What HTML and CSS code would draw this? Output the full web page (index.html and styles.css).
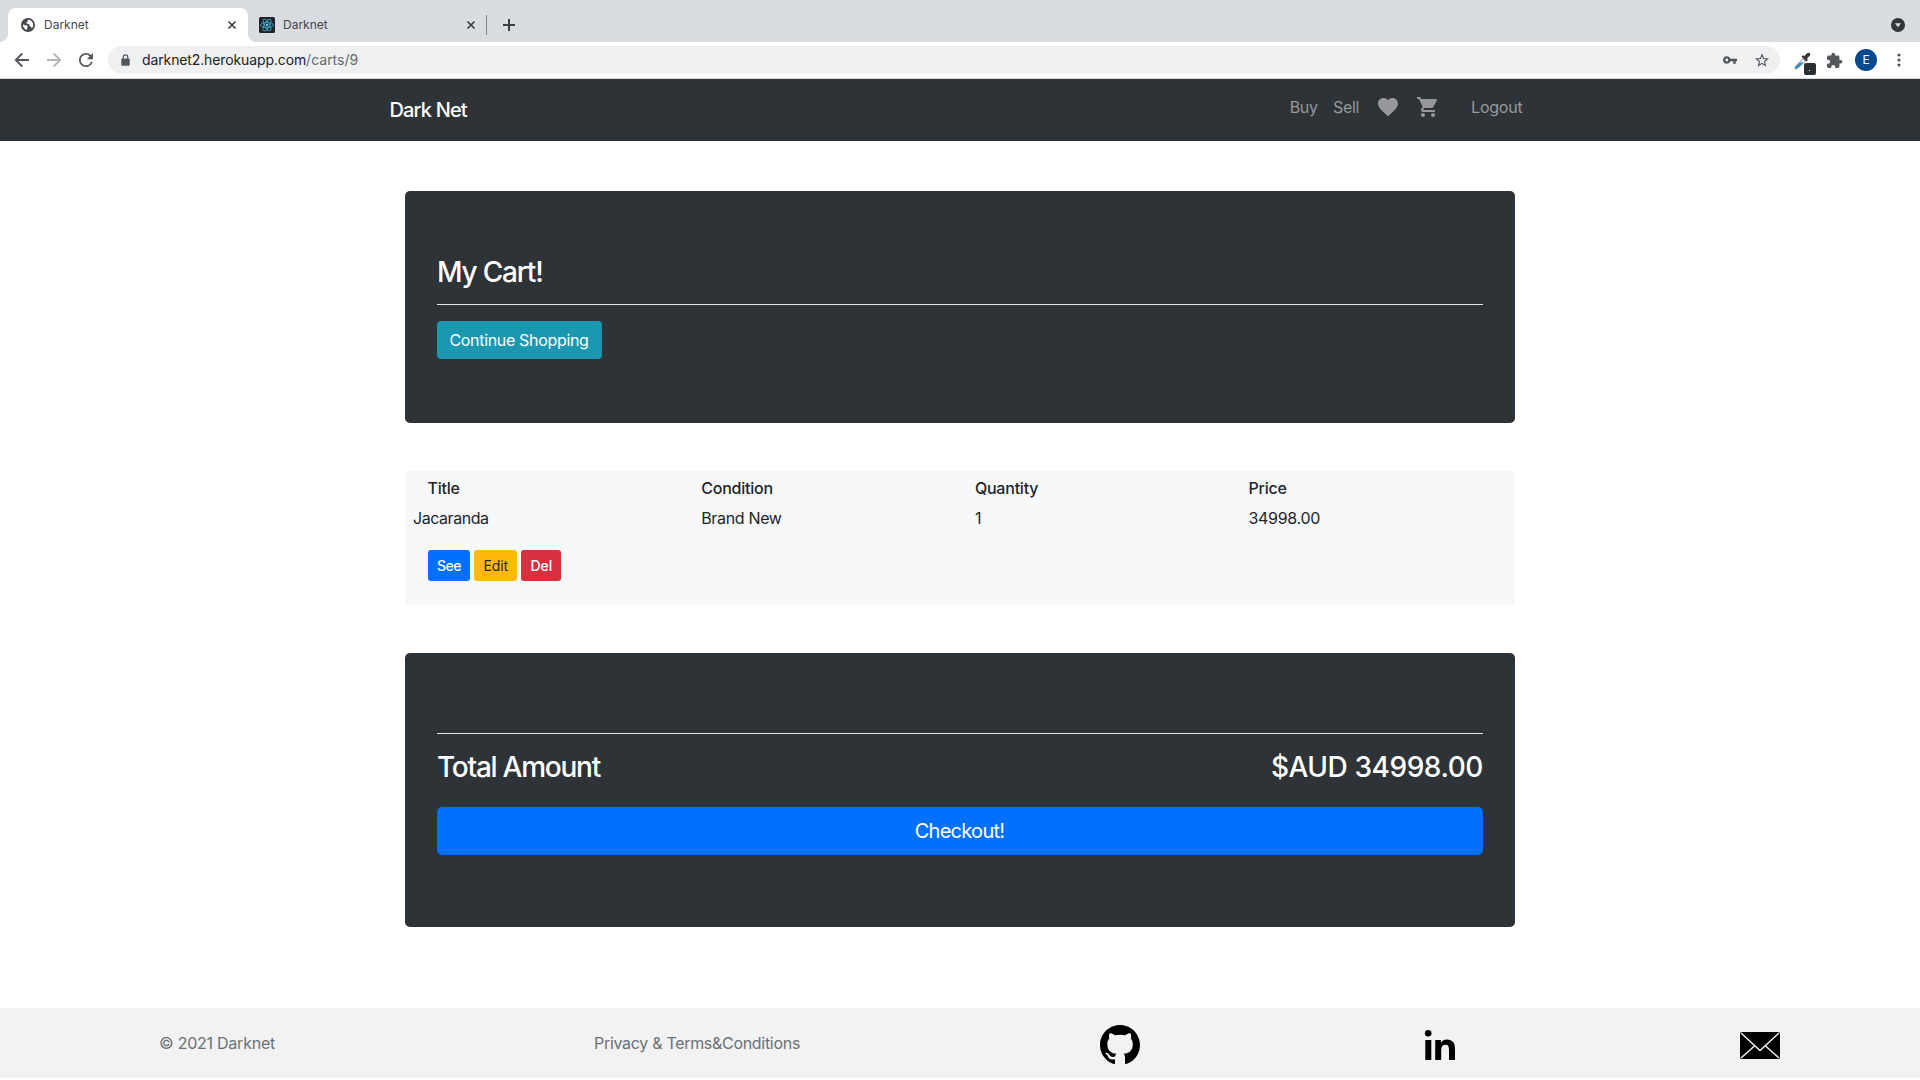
FILE: index.html
```html
<!DOCTYPE html>
<html lang="en">
<head>
<meta charset="utf-8">
<title>Darknet</title>
<link rel="stylesheet" href="styles.css">
</head>
<body>
<header class="browser">
  <div class="tabstrip">
    <div class="tab tab-active">
      <svg class="favicon" viewBox="0 0 14 14"><circle cx="7" cy="7" r="7" fill="#45484d"/><path d="M1.800 6.500c1.400.2 2.800.7 4 .9 1.300.2.9 1.300.5 2.100-.3.8.1 1.600-.6 2.400-2.300-.8-3.900-2.800-3.900-5.400zM7.200 1.700c2.800.1 5 2.400 5 5.200 0 1.200-.5 2.500-1.300 3.500-.5-.7-.5-1.600-1.500-1.900-.9-.2-.5-1.400-1.200-2C7.300 5.600 5.400 6 4.900 5.200c-.2-.9 1.500-.7 1.700-1.400.2-.7-.1-1.400.6-2.100z" fill="#fff"/></svg>
      <span class="tab-title">Darknet</span>
      <svg class="tab-close" viewBox="0 0 10 10"><path d="M1.500 1.500l7 7M8.500 1.500l-7 7"/></svg>
    </div>
    <div class="tab tab-second">
      <svg class="favicon-react" viewBox="0 0 16 16"><rect width="16" height="16" rx="1.500" fill="#20232a"/><g fill="none" stroke="#3fa9c6" stroke-width=".9"><ellipse cx="8" cy="8" rx="6.500" ry="2.500"/><ellipse cx="8" cy="8" rx="6.500" ry="2.500" transform="rotate(60 8 8)"/><ellipse cx="8" cy="8" rx="6.500" ry="2.500" transform="rotate(120 8 8)"/></g><circle cx="8" cy="8" r="1.200" fill="#61dafb"/></svg>
      <span class="tab-title">Darknet</span>
      <svg class="tab-close" viewBox="0 0 10 10"><path d="M1.500 1.500l7 7M8.500 1.500l-7 7"/></svg>
    </div>
    <span class="tab-divider"></span>
    <svg class="new-tab" viewBox="0 0 12 12"><path d="M6 0v12M0 6h12" stroke="#3c4043" stroke-width="2"/></svg>
    <svg class="tab-search" viewBox="0 0 14 14"><circle cx="7" cy="7" r="7" fill="#33373b"/><path d="M4 5.200h6L7 9.200z" fill="#dadce0"/></svg>
  </div>
  <div class="toolbar">
    <svg class="nav-arrow" viewBox="0 0 16 16"><path d="M15 8H2M8.300 1.500L1.800 8l6.500 6.500"/></svg>
    <svg class="nav-arrow nav-forward" viewBox="0 0 16 16"><path d="M1 8h13M7.700 1.500L14.200 8l-6.500 6.500"/></svg>
    <svg class="reload" viewBox="4 4 16 16"><path d="M17.650 6.350A7.958 7.958 0 0 0 12 4c-4.420 0-7.990 3.580-7.990 8s3.570 8 7.990 8c3.730 0 6.840-2.550 7.730-6h-2.080A5.990 5.990 0 0 1 12 18c-3.310 0-6-2.690-6-6s2.690-6 6-6c1.660 0 3.140.69 4.220 1.780L13 11h7V4l-2.350 2.350z" fill="#54575c"/></svg>
    <div class="omnibox">
      <svg class="lock" viewBox="0 0 9 12"><path d="M2.200 5V3.200a2.300 2.300 0 0 1 4.600 0V5" fill="none" stroke="#54575c" stroke-width="1.200"/><rect x=".3" y="4.500" width="8.400" height="7.200" rx="1" fill="#54575c"/></svg>
      <span class="url-host">darknet2.herokuapp.com</span><span class="url-path">/carts/9</span>
      <svg class="key" viewBox="1 6 22 12"><path d="M12.650 10C11.830 7.670 9.610 6 7 6c-3.310 0-6 2.690-6 6s2.690 6 6 6c2.610 0 4.830-1.670 5.650-4H17v4h4v-4h2v-4H12.650zM7 14.200A2.200 2.200 0 1 1 7 9.800a2.200 2.200 0 0 1 0 4.400z" fill="#54575c"/></svg>
      <svg class="star" viewBox="2 2 20 19"><path d="M22 9.240l-7.190-.62L12 2 9.190 8.630 2 9.240l5.460 4.730L5.820 21 12 17.270 18.180 21l-1.630-7.030L22 9.240zM12 15.400l-3.760 2.270 1-4.280-3.320-2.880 4.380-.38L12 6.100l1.710 4.040 4.380.38-3.320 2.880 1 4.280L12 15.400z" fill="#54575c"/></svg>
    </div>
    <svg class="picker" viewBox="0 0 22 23"><path d="M1.200 14.600L9 6.500l2.500 2.500-8 7.500-2.400.6z" fill="#eef1f3" stroke="#8b8f93"/><path d="M1.500 14.700l4.500-4.200h3.400l-6 5.700-2 .4z" fill="#2e8bcb"/><path d="M7.500 4.800l1.600-1.600 1.700.8c1.200-2 2.300-3.500 4.100-3.300 1.300.2 1.800 1.700 1 2.900-.8 1.200-1.900 1.900-2.700 2.700l.6 1.700-1.500 1.500z" fill="#3b3735"/><rect x="10" y="11" width="12" height="12" rx="2" fill="#2b2f33"/><rect x="15" y="18" width="1" height="1" fill="#fff"/></svg>
    <svg class="puzzle" viewBox="2 1.500 20.500 20.500"><path d="M20.500 11H19V7c0-1.100-.9-2-2-2h-4V3.500a2.500 2.500 0 0 0-5 0V5H4c-1.100 0-1.990.9-1.990 2v3.800H3.500c1.490 0 2.700 1.210 2.700 2.700s-1.210 2.700-2.700 2.700H2V20c0 1.100.9 2 2 2h3.800v-1.500c0-1.490 1.210-2.700 2.700-2.700s2.700 1.210 2.700 2.700V22H17c1.100 0 2-.9 2-2v-4h1.500a2.500 2.500 0 0 0 0-5z" fill="#54575c"/></svg>
    <span class="avatar">E</span>
    <svg class="menu" viewBox="0 0 4 14"><g fill="#54575c"><circle cx="2" cy="2" r="1.600"/><circle cx="2" cy="7" r="1.600"/><circle cx="2" cy="12" r="1.600"/></g></svg>
  </div>
</header>

<nav class="navbar">
  <a class="brand">Dark Net</a>
  <div class="links">
    <a class="link">Buy</a>
    <a class="link">Sell</a>
    <svg class="nav-icon" viewBox="0 0 24 24"><path d="M12 21.350l-1.450-1.320C5.400 15.360 2 12.280 2 8.500 2 5.420 4.420 3 7.500 3c1.740 0 3.410.81 4.500 2.090C13.090 3.810 14.760 3 16.500 3 19.580 3 22 5.420 22 8.500c0 3.780-3.400 6.860-8.550 11.540L12 21.350z"/></svg>
    <svg class="nav-icon nav-cart" viewBox="0 0 24 24"><path d="M7 18c-1.100 0-1.990.9-1.990 2S5.900 22 7 22s2-.9 2-2-.9-2-2-2zM1 2v2h2l3.600 7.590-1.350 2.450c-.16.28-.25.61-.25.96 0 1.100.9 2 2 2h12v-2H7.420c-.14 0-.25-.11-.25-.25l.03-.12.9-1.630h7.450c.75 0 1.410-.41 1.750-1.030l3.580-6.490c.08-.14.12-.31.12-.48 0-.55-.45-1-1-1H5.210l-.94-2H1zm16 16c-1.100 0-1.990.9-1.990 2s.89 2 1.990 2 2-.9 2-2-.9-2-2-2z"/></svg>
    <a class="link logout">Logout</a>
  </div>
</nav>

<main class="content">
  <section class="panel">
    <h3 class="heading">My Cart!</h3>
    <hr class="rule">
    <a class="btn btn-info">Continue Shopping</a>
  </section>

  <section class="cart">
    <div class="row row-head">
      <span>Title</span><span>Condition</span><span>Quantity</span><span>Price</span>
    </div>
    <div class="row">
      <span class="item-title">Jacaranda</span><span>Brand New</span><span>1</span><span>34998.00</span>
    </div>
    <div class="actions">
      <a class="btn-sm btn-primary">See</a>
      <a class="btn-sm btn-warning">Edit</a>
      <a class="btn-sm btn-danger">Del</a>
    </div>
  </section>

  <section class="panel panel-total">
    <hr class="rule">
    <div class="total">
      <h3 class="heading heading-total">Total Amount</h3>
      <h3 class="heading amount">$AUD 34998.00</h3>
    </div>
    <a class="checkout btn-primary">Checkout!</a>
  </section>
</main>

<footer class="footer">
  <span class="footer-text">© 2021 Darknet</span>
  <span class="footer-text">Privacy &amp; Terms&amp;Conditions</span>
  <svg class="github" viewBox="0 0 16 16"><path d="M8 0C3.580 0 0 3.580 0 8c0 3.540 2.290 6.530 5.470 7.590.4.070.55-.17.55-.38 0-.19-.01-.82-.01-1.490-2.010.37-2.530-.49-2.690-.94-.09-.23-.48-.94-.82-1.130-.28-.15-.68-.52-.01-.53.63-.01 1.080.58 1.230.82.72 1.210 1.870.87 2.330.66.07-.52.28-.87.51-1.070-1.780-.2-3.640-.89-3.640-3.950 0-.87.31-1.590.82-2.150-.08-.2-.36-1.020.08-2.120 0 0 .67-.21 2.200.82.64-.18 1.320-.27 2-.27s1.360.09 2 .27c1.530-1.040 2.200-.82 2.200-.82.44 1.100.16 1.920.08 2.120.51.56.82 1.270.82 2.150 0 3.070-1.870 3.750-3.650 3.950.29.25.54.73.54 1.480 0 1.070-.01 1.930-.01 2.200 0 .21.15.46.55.38A8.010 8.010 0 0 0 16 8c0-4.420-3.580-8-8-8z"/></svg>
  <svg class="linkedin" viewBox="0 0 30 30"><circle cx="3.200" cy="3.200" r="3.300"/><path d="M.3 10h6v20h-6zM10.200 10h5.700v2.700c1-1.900 3-3.200 5.800-3.200 6 0 8.300 3.500 8.300 9.300V30h-6V20c0-3.400-.8-5.300-3.500-5.300-3 0-4.300 2-4.300 5.300v10h-6z"/></svg>
  <svg class="mail" viewBox="0 0 40 27"><rect width="40" height="27" rx="1.500"/><path d="M1 1l19 17.500L39 1M1 26l14-12.500M39 26L25 13.500" fill="none" stroke="#f2f2f2" stroke-width="1.500"/></svg>
</footer>
</body>
</html>
```
FILE: styles.css
```css
* { box-sizing: border-box; }
body {
  margin: 0;
  height: 1080px;
  display: flex;
  flex-direction: column;
  overflow: hidden;
  background: #fff;
  color: #212529;
  font: 400 16px/24px Inter, "Liberation Sans", sans-serif;
  letter-spacing: -0.33px;
}
svg { display: block; flex: none; overflow: visible; }

/* Browser window */
.browser { height: 79px; border-bottom: 1px solid #d4d6d9; letter-spacing: 0; }
.tabstrip { height: 42px; padding: 8px 15px 0 8px; display: flex; align-items: center; background: #d9dce1; }
.tab { width: 240px; height: 34px; padding: 0 11px 0 12px; display: flex; align-items: center; color: #45484c; font-size: 12px; line-height: 34px; }
.tab-active {
  position: relative;
  border-radius: 8px 8px 0 0;
  background: #fff;
}
.tab-active::before, .tab-active::after {
  content: "";
  position: absolute;
  bottom: 0;
  left: -8px;
  width: 8px;
  height: 8px;
  background: radial-gradient(circle at 0 0, transparent 7.5px, #fff 8px);
}
.tab-active::after { left: 240px; background: radial-gradient(circle at 100% 0, transparent 7.5px, #fff 8px); }
.tab-second { padding: 0 12px 0 11px; }
.favicon { width: 14px; height: 14px; margin-left: 1px; }
.favicon-react { width: 16px; height: 16px; }
.tab-title { margin: -1px auto 0 8px; }
.tab-active .tab-title { margin-left: 9px; }
.tab-close { width: 10px; height: 10px; stroke: #3c4043; stroke-width: 1.7; fill: none; }
.tab-divider { width: 1px; height: 20px; margin: 0 16px 0 -2px; background: #808387; }
.new-tab { width: 12px; height: 12px; }
.tab-search { width: 14px; height: 14px; margin-left: auto; }
.toolbar { height: 36px; padding: 0 19px 0 14px; display: flex; align-items: center; background: #fff; }
.nav-arrow { width: 16px; height: 16px; fill: none; stroke: #54575c; stroke-width: 1.9; }
.nav-forward { margin-left: 16px; stroke: #b4b6b9; }
.reload { width: 14px; height: 14px; margin: 0 15px 0 17px; }
.omnibox { flex: 1; height: 28px; padding: 0 11px 0 13px; display: flex; align-items: center; border-radius: 14px; background: #eff0f2; font-size: 14px; }
.lock { width: 9px; height: 12px; margin: 0 12px 1px 0; }
.url-host { color: #202124; letter-spacing: -0.12px; }
.url-path { color: #66696d; }
.key { width: 14px; height: 8px; margin: 0 18px 1px auto; }
.star { width: 14px; height: 14px; }
.picker { width: 22px; height: 23px; margin: 6px 11px 0 14px; }
.puzzle { width: 15px; height: 15px; margin-right: 13px; }
.avatar { width: 22px; height: 22px; margin-right: 20px; border-radius: 50%; background: #07498c; color: #fff; font-size: 12px; line-height: 22px; text-align: center; }
.menu { width: 4px; height: 14px; }

/* Site navigation */
.navbar { height: 62px; padding: 16px 397.5px 0 389px; display: flex; justify-content: space-between; background: #2e3337; }
.brand { margin-left: 0.5px; color: #fff; font-size: 20px; font-weight: 500; line-height: 30px; letter-spacing: -0.84px; }
.links { display: flex; align-items: flex-start; color: #97999b; }
.link { margin-right: 16px; letter-spacing: -0.35px; }
.link + .link { margin: 0 17px 0 -0.5px; }
.nav-icon { width: 24px; height: 24px; fill: #98989c; }
.nav-cart { margin-left: 16px; }
.logout { margin: 0 0 0 31px; letter-spacing: -0.22px; }

/* Cart page */
.content { width: 1110px; margin: 50px auto 81px; }
.panel { height: 232px; padding: 64px 32px; border-radius: 5px; background: #2e3337; color: #fff; }
.heading { margin: 0; font-size: 28px; font-weight: 550; line-height: 34px; letter-spacing: -1.2px; }
.rule { height: 1px; margin: 15px 0 16px; border: 0; background: #e3e5e6; }
.btn { display: inline-block; width: 165px; height: 38px; padding: 7px 12.5px; border-radius: 4px; white-space: nowrap; }
.btn-info { background: #1998b0; color: #fff; }
.cart { height: 134px; margin: 48px 0; padding-top: 5px; background: #f7f8fa; }
.row { display: grid; grid-template-columns: repeat(4, 273.7px); padding: 0 0 6px 22.5px; }
.row-head { font-weight: 550; letter-spacing: -0.22px; }
.item-title { margin-left: -14.500px; letter-spacing: -0.45px; }
.actions { display: flex; gap: 4px; padding: 14px 0 0 23px; }
.btn-sm { height: 31px; padding: 5px 9px; border-radius: 3px; font-size: 14px; line-height: 21px; letter-spacing: -0.1px; }
.btn-primary { background: #0070ff; color: #fff; }
.btn-warning { padding-left: 9.5px; background: #ffb90d; }
.btn-danger { padding: 5px 8.500px 5px 9.500px; background: #d7303e; color: #fff; }
.btn-primary.btn-sm, .btn-danger { font-weight: 500; }
.btn-primary.btn-sm { letter-spacing: -0.5px; }
.panel-total { height: 274px; }
.panel-total .rule { margin: 16px 0; }
.total { display: flex; justify-content: space-between; margin-bottom: 23px; }
.heading-total { letter-spacing: -1.25px; }
.amount { letter-spacing: -0.44px; }
.checkout { display: block; height: 48px; padding-right: 1px; border-radius: 5px; font-size: 20px; line-height: 48px; text-align: center; letter-spacing: -0.72px; }

/* Footer */
.footer { height: 70px; padding: 0 140px 0 159px; display: flex; align-items: flex-start; background: #f2f2f2; }
.footer-text { margin-top: 23px; color: #6a7178; letter-spacing: -0.24px; }
.footer-text + .footer-text { margin-left: 319px; letter-spacing: -0.3px; }
.github { width: 40px; height: 40px; margin: 17px 0 0 auto; }
.linkedin { width: 30px; height: 30px; margin: 22px 285px 0; }
.mail { width: 40px; height: 27px; margin-top: 24px; }
```
